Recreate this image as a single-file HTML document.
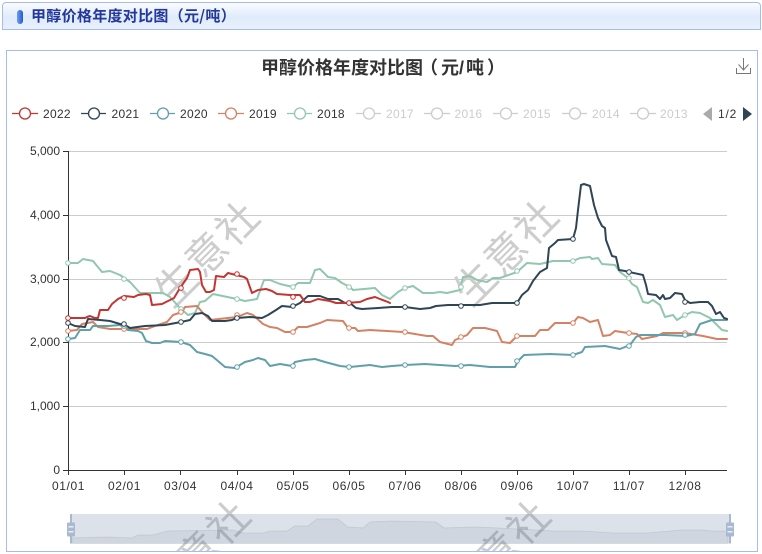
<!DOCTYPE html>
<html>
<head>
<meta charset="utf-8">
<style>
html,body{margin:0;padding:0;background:#fff;width:762px;height:554px;overflow:hidden}
body{position:relative;font-family:"Liberation Sans","Noto Sans CJK SC",sans-serif}
#hd{position:absolute;left:2px;top:2px;width:757px;height:26px;border:1px solid #a6bbf4;border-radius:4px 4px 0 0;background:linear-gradient(#fbfdff 0%,#dfeafb 55%,#e9f1fc 100%)}
#bar{position:absolute;left:14px;top:7px;width:6px;height:14px;border-radius:3px;background:linear-gradient(90deg,#6f9df0,#1f5bd0)}
#ht{position:absolute;left:28px;top:3px;font-size:15px;line-height:20px;color:#23389a;font-weight:bold;white-space:nowrap;letter-spacing:.3px;font-family:"WenQuanYi Zen Hei","Noto Sans CJK SC",sans-serif}
#pn{position:absolute;left:6px;top:50px;width:750px;height:500px;border:1px solid #a6bbf4;background:#fff;overflow:hidden}
svg{position:absolute;left:-7px;top:-51px}
text{font-family:"Liberation Sans","Noto Sans CJK SC",sans-serif}
.wm{position:absolute;width:0;height:0;display:flex;justify-content:center;align-items:center;white-space:nowrap;font-size:41px;line-height:41px;letter-spacing:2px;color:#cdcdcd;transform:rotate(-45deg);font-family:"WenQuanYi Zen Hei","Noto Sans CJK SC",sans-serif}
</style>
</head>
<body>
<div id="hd"><div id="bar"></div><div id="ht">甲醇价格年度对比图（元/吨）</div></div>
<div id="pn">
<div class="wm" style="left:198px;top:200px">生意社</div>
<div class="wm" style="left:497px;top:199px">生意社</div>
<div class="wm" style="left:189px;top:499px">生意社</div>
<div class="wm" style="left:489px;top:499px">生意社</div>
<svg width="762" height="554" viewBox="0 0 762 554" xmlns="http://www.w3.org/2000/svg">
<!-- title -->
<text x="261" y="74" font-size="18" font-weight="bold" fill="#333">甲醇价格年度对比图<tspan dx="-3">（</tspan><tspan dx="3">元/</tspan><tspan dx="2">吨</tspan><tspan dx="3">）</tspan></text>
<!-- download icon -->
<g fill="none" stroke="#777" stroke-width="1">
<path d="M736.5 68v5.500h14V68"/><path d="M743.500 58v11.500M738.500 64.500l5 5.500 5-5.500"/>
</g>
<!-- legend -->
<g fill="#fff" stroke-width="1.300">
<g stroke="#c23531"><path d="M12 113.500h26"/><circle cx="25" cy="113.500" r="5.500"/></g>
<g stroke="#2f4554"><path d="M81 113.500h25"/><circle cx="94" cy="113.500" r="5.500"/></g>
<g stroke="#61a0a8"><path d="M150 113.500h25"/><circle cx="163" cy="113.500" r="5.500"/></g>
<g stroke="#d48265"><path d="M218 113.500h26"/><circle cx="231" cy="113.500" r="5.500"/></g>
<g stroke="#91c7ae"><path d="M287 113.500h25"/><circle cx="300" cy="113.500" r="5.500"/></g>
<g stroke="#ccc"><path d="M356 113.500h25"/><circle cx="369" cy="113.500" r="5.500"/>
<path d="M424 113.500h26"/><circle cx="437" cy="113.500" r="5.500"/>
<path d="M493 113.500h25"/><circle cx="506" cy="113.500" r="5.500"/>
<path d="M562 113.500h25"/><circle cx="575" cy="113.500" r="5.500"/>
<path d="M630 113.500h26"/><circle cx="643" cy="113.500" r="5.500"/></g>
</g>
<g font-size="12" fill="#333" letter-spacing=".3">
<text x="43" y="118">2022</text><text x="111.500" y="118">2021</text><text x="180" y="118">2020</text><text x="249" y="118">2019</text><text x="317" y="118">2018</text>
<g fill="#ccc"><text x="386" y="118">2017</text><text x="454.500" y="118">2016</text><text x="523" y="118">2015</text><text x="592" y="118">2014</text><text x="660" y="118">2013</text></g>
<text x="718" y="118" letter-spacing=".8">1/2</text>
</g>
<path d="M712 107v14l-9-7z" fill="#aaa"/><path d="M743 107v14l9-7z" fill="#2f4554"/>
<!-- grid -->
<g stroke="#ccc" stroke-width="1">
<path d="M69 151.500H727M69 215.500H727M69 279.500H727M69 342.500H727M69 406.500H727"/>
</g>
<!-- axes -->
<g stroke="#333" stroke-width="1" fill="none">
<path d="M68.500 151V470M63 151.500h5M63 215.500h5M63 279.500h5M63 342.500h5M63 406.500h5M63 470.500h5"/>
<path d="M68 470.500H727M68.500 470v5M124.500 470v5M180.500 470v5M237.500 470v5M293.500 470v5M349.500 470v5M405.500 470v5M461.500 470v5M517.500 470v5M573.500 470v5M629.500 470v5M685.500 470v5"/>
</g>
<g font-size="12" fill="#333" text-anchor="end">
<text x="60" y="155">5,000</text><text x="60" y="219">4,000</text><text x="60" y="283">3,000</text><text x="60" y="346">2,000</text><text x="60" y="410">1,000</text><text x="60" y="474">0</text>
</g>
<g font-size="12" fill="#333" text-anchor="middle" letter-spacing=".6">
<text x="68.500" y="490">01/01</text><text x="124.500" y="490">02/01</text><text x="180.500" y="490">03/04</text><text x="237" y="490">04/04</text><text x="293" y="490">05/05</text><text x="349" y="490">06/05</text><text x="405" y="490">07/06</text><text x="461" y="490">08/06</text><text x="517" y="490">09/06</text><text x="573" y="490">10/07</text><text x="629" y="490">11/07</text><text x="685" y="490">12/08</text>
</g>
<!-- series -->
<g fill="none" stroke-width="2" stroke-linejoin="round" stroke-linecap="round">
<polyline stroke="#91c7ae" points="68,263 78,263 83,259 93,261 102,272 110,271 120,275 130,282 140,293 163,293 170,297 180,308 188,315 195,313 200,302 205,301 213,294 237,299 245,301 257,299 264,280 270,280 275,282 280,284 293,287 298,283 310,283 315,270 320,269 328,277 335,278 342,283 350,287 353,290 375,288 382,295 390,299 398,292 405,288 413,286 423,293 433,293 440,292 447,293 460,290 463,277 470,276 477,280 487,282 493,278 500,278 517,272 527,263 540,264 553,261 573,261 580,258 590,257 592,259 598,258 602,264 615,265 620,272 628,278 632,284 637,287 643,302 648,303 653,300 660,305 665,317 673,315 677,320 685,315 692,312 700,313 710,318 722,330 727,331"/>
<polyline stroke="#d48265" points="68,331 77,330 82,324 93,322 98,327 110,329 124,329 147,329 155,326 167,322 173,315 182,312 185,307 197,306 203,313 210,320 237,317 247,313 253,315 263,324 270,327 277,328 285,332 293,332 298,327 307,327 320,323 327,320 343,321 348,328 355,328 358,331 370,330 403,332 427,336 433,336 440,342 452,345 455,340 467,335 473,328 485,328 497,331 502,342 510,343 517,336 535,336 540,330 548,330 555,323 573,323 578,317 583,318 590,322 598,320 603,336 610,335 615,331 628,333 637,334 642,339 657,336 663,333 685,333 703,336 717,339 727,339"/>
<polyline stroke="#61a0a8" points="68,339 75,338 80,330 90,330 93,326 108,326 120,325 128,330 138,331 142,333 146,341 152,343 160,343 165,341 181,342 190,345 197,352 205,354 212,356 218,361 225,367 235,368 245,362 253,360 258,358 265,360 270,366 280,364 292,366 295,362 305,360 315,359 325,362 340,366 350,367 370,365 382,367 392,366 405,365 425,364 440,365 455,366 470,365 490,367 515,367 518,361 524,355 550,354 573,355 582,352 585,347 605,346 620,349 630,345 636,337 640,335 665,335 686,336 695,334 700,324 712,320 727,320"/>
<polyline stroke="#2f4554" points="68,323 75,326 85,327 88,319 100,320 110,321 120,324 125,325 130,328 145,326 165,325 181,322 190,320 195,314 202,313 208,316 212,321 225,321 232,320 237,318 250,317 262,318 268,315 276,310 282,306 292,307 300,303 308,296 320,296 328,299 338,299 345,303 350,303 356,308 362,309 378,308 392,307 405,307 420,309 430,308 436,306 448,305 470,305 480,305 492,303 505,303 517,303 522,295 528,290 533,281 540,272 547,268 549,248 555,243 558,240 573,239 576,228 578,210 581,185 584,184 590,186 594,205 598,218 602,226 605,228 606,240 612,256 616,257 619,270 625,271 629,272 643,275 646,285 648,294 656,295 660,299 663,295 665,299 670,298 675,293 682,294 685,300 690,303 700,302 708,302 712,306 716,314 720,312 724,318 727,319"/>
<polyline stroke="#c23531" points="68,318 85,318 87,317 90,316 95,318 98,318 100,310 108,310 112,304 118,299 124,296 134,297 138,295 146,294 150,295 152,305 162,304 170,300 174,298 180,288 187,278 190,270 198,269 200,272 202,285 206,292 210,292 214,290 216,276 224,277 228,273 236,275 244,277 247,279 252,293 258,290 266,289 272,291 277,294 290,295 300,295 305,302 310,302 318,299 330,301 336,303 345,303 360,302 367,299 375,297 380,299 388,302 390,303"/>
</g>
<!-- markers -->
<g fill="#fff" stroke-width="1">
<g stroke="#91c7ae"><circle cx="68" cy="263" r="2.300"/><circle cx="124" cy="279" r="2.300"/><circle cx="181" cy="309" r="2.300"/><circle cx="237" cy="299" r="2.300"/><circle cx="293" cy="287" r="2.300"/><circle cx="349" cy="287" r="2.300"/><circle cx="405" cy="288" r="2.300"/><circle cx="461" cy="287" r="2.300"/><circle cx="517" cy="271" r="2.300"/><circle cx="573" cy="261" r="2.300"/><circle cx="629" cy="278" r="2.300"/><circle cx="685" cy="315" r="2.300"/></g>
<g stroke="#d48265"><circle cx="68" cy="331" r="2.300"/><circle cx="124" cy="329" r="2.300"/><circle cx="181" cy="312" r="2.300"/><circle cx="237" cy="315" r="2.300"/><circle cx="293" cy="332" r="2.300"/><circle cx="349" cy="328" r="2.300"/><circle cx="405" cy="332" r="2.300"/><circle cx="461" cy="337" r="2.300"/><circle cx="517" cy="336" r="2.300"/><circle cx="573" cy="323" r="2.300"/><circle cx="629" cy="333" r="2.300"/><circle cx="685" cy="333" r="2.300"/></g>
<g stroke="#61a0a8"><circle cx="68" cy="339" r="2.300"/><circle cx="124" cy="326" r="2.300"/><circle cx="181" cy="342" r="2.300"/><circle cx="237" cy="367" r="2.300"/><circle cx="293" cy="366" r="2.300"/><circle cx="349" cy="367" r="2.300"/><circle cx="405" cy="365" r="2.300"/><circle cx="461" cy="366" r="2.300"/><circle cx="517" cy="361" r="2.300"/><circle cx="573" cy="355" r="2.300"/><circle cx="629" cy="346" r="2.300"/><circle cx="685" cy="335" r="2.300"/></g>
<g stroke="#2f4554"><circle cx="68" cy="323" r="2.300"/><circle cx="124" cy="324" r="2.300"/><circle cx="181" cy="322" r="2.300"/><circle cx="237" cy="318" r="2.300"/><circle cx="293" cy="306" r="2.300"/><circle cx="349" cy="303" r="2.300"/><circle cx="405" cy="307" r="2.300"/><circle cx="461" cy="306" r="2.300"/><circle cx="517" cy="303" r="2.300"/><circle cx="573" cy="239" r="2.300"/><circle cx="629" cy="272" r="2.300"/><circle cx="685" cy="302" r="2.300"/></g>
<g stroke="#c23531"><circle cx="68" cy="318" r="2.300"/><circle cx="124" cy="298" r="2.300"/><circle cx="181" cy="288" r="2.300"/><circle cx="237" cy="274" r="2.300"/><circle cx="293" cy="297" r="2.300"/><circle cx="349" cy="303" r="2.300"/></g>
</g>
<!-- data zoom -->
<rect x="71" y="514" width="659" height="29.500" fill="#4f6a96" fill-opacity=".2"/>
<path d="M72 538L107 537 132 538 138 535 153 535 167 531 233 530 243 533 263 533 270 531 287 531 295 526 308 526 317 519 338 519 348 527 363 528 370 522 391 521 436 522 444 528 474 527 498 528 554 531 581 531 614 533 648 533 681 530 704 530 711 531 728 531V543.500H72Z" fill="#2f4554" fill-opacity=".07" stroke="#2f4554" stroke-opacity=".12" stroke-width=".8"/>
<rect x="70" y="514" width="2" height="29.500" fill="#a9b9d2"/><rect x="729" y="514" width="2" height="29.500" fill="#a9b9d2"/>
<g fill="#a9b9d2"><rect x="67" y="522.500" width="8" height="14" rx="1"/><rect x="726" y="522.500" width="8" height="14" rx="1"/></g>
<g fill="#e8edf5"><rect x="68.500" y="526" width="5" height="1.500"/><rect x="68.500" y="531" width="5" height="1.500"/><rect x="727.500" y="526" width="5" height="1.500"/><rect x="727.500" y="531" width="5" height="1.500"/></g>
</svg>
</div>
</body>
</html>
